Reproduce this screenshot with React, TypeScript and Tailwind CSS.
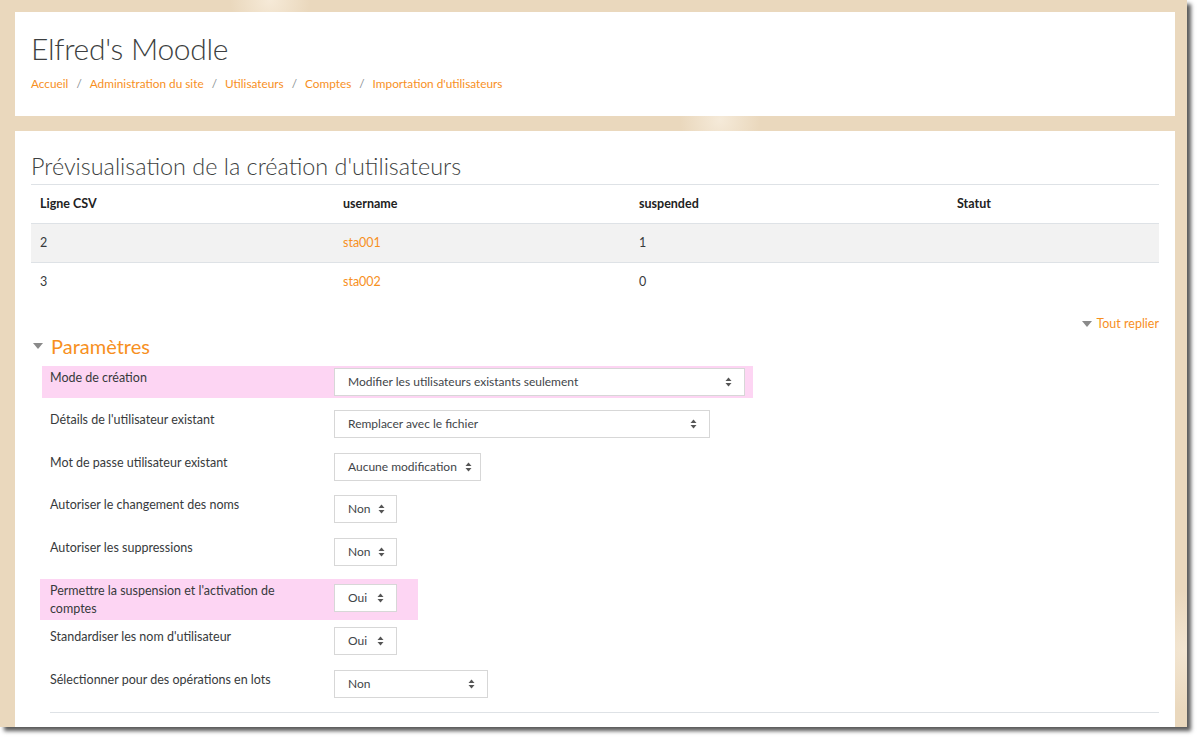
import React from 'react';

const orange = 'text-[#f7901e]';

function Arrows() {
  return (
    <svg width="7" height="10" viewBox="0 0 7 10" className="shrink-0">
      <path d="M3.5 0.5 L6.5 4 L0.5 4 Z" fill="#555" />
      <path d="M0.5 6 L6.5 6 L3.5 9.5 Z" fill="#555" />
    </svg>
  );
}

function Select({ value, width, className = '' }: { value: string; width: string; className?: string }) {
  return (
    <div
      className={`${width} h-[28px] shrink-0 border border-[#d7d7d7] bg-white flex items-center justify-between gap-[8px] pl-[13px] pr-[12px] text-[12px] text-[#3f4549] whitespace-nowrap ${className}`}
    >
      <span>{value}</span>
      <Arrows />
    </div>
  );
}

function Caret({ size = 10 }: { size?: number }) {
  return (
    <svg width={size} height={size * 0.6} viewBox="0 0 10 6">
      <path d="M0 0 L10 0 L5 6 Z" fill="#8a8a8a" />
    </svg>
  );
}

const rows = [
  { label: 'Mode de création', value: 'Modifier les utilisateurs existants seulement', w: 'w-[411px]', pink: true, cls: 'mt-0 ml-[11px] pl-[8px] w-[711px]' },
  { label: "Détails de l'utilisateur existant", value: 'Remplacer avec le fichier', w: 'w-[376px]', cls: 'mt-[10px] ml-[11px] pl-[8px]' },
  { label: 'Mot de passe utilisateur existant', value: 'Aucune modification', w: 'w-[147px]', cls: 'mt-[11px] ml-[11px] pl-[8px]' },
  { label: 'Autoriser le changement des noms', value: 'Non', w: 'w-[63px]', cls: 'mt-[10px] ml-[11px] pl-[8px]' },
  { label: 'Autoriser les suppressions', value: 'Non', w: 'w-[63px]', cls: 'mt-[11px] ml-[11px] pl-[8px]' },
  { label: "Permettre la suspension et l'activation de comptes", value: 'Oui', w: 'w-[63px]', pink: true, cls: 'mt-[11px] ml-[9px] pl-[10px] w-[378px]', two: true },
  { label: "Standardiser les nom d'utilisateur", value: 'Oui', w: 'w-[63px]', cls: 'mt-[5px] ml-[11px] pl-[8px]' },
  { label: 'Sélectionner pour des opérations en lots', value: 'Non', w: 'w-[154px]', cls: 'mt-[11px] ml-[11px] pl-[8px]' },
];

export default function App() {
  return (
    <div className="w-[1200px] h-[740px] bg-white overflow-hidden font-['Lato','Open_Sans',sans-serif] text-[#373a3c]">
      <div className="w-[1187px] h-[727px] flex flex-col gap-[15px] pt-[12px] pl-[15px] pr-[12px] bg-[#ead8bd] bg-[radial-gradient(circle_at_270px_0px,#f6ead8_0,transparent_40px),radial-gradient(circle_at_720px_120px,#f5ead9_0,transparent_40px),radial-gradient(circle_at_1185px_650px,#f3e6d2_0,transparent_60px)] shadow-[4px_4px_4px_rgba(0,0,0,0.65)]">
        {/* header */}
        <div className="h-[104px] shrink-0 bg-white pt-[18px] px-[16px]">
          <h1 className="text-[30px] leading-[36px] font-light text-[#3d3f41] tracking-[-0.3px]">Elfred's Moodle</h1>
          <nav className={`mt-[9px] text-[11.8px] leading-[18px] flex items-center ${orange}`}>
            {['Accueil', 'Administration du site', 'Utilisateurs', 'Comptes', "Importation d'utilisateurs"].map((b, i) => (
              <React.Fragment key={b}>
                {i > 0 && <span className="px-[8px] text-[#8a8f93]">/</span>}
                <span>{b}</span>
              </React.Fragment>
            ))}
          </nav>
        </div>

        {/* main */}
        <div className="flex-1 bg-white pt-[20px] px-[16px]">
          <h2 className="text-[23.4px] leading-[30px] font-light text-[#3d3f41] mb-[3px]">Prévisualisation de la création d'utilisateurs</h2>
          <div className="text-[12.5px]">
            <div className="grid grid-cols-[303px_296px_318px_1fr] h-[39px] border-t border-[#dee2e6] items-center font-bold text-[#222]">
              <div className="pl-[9px]">Ligne CSV</div>
              <div className="pl-[9px]">username</div>
              <div className="pl-[9px]">suspended</div>
              <div className="pl-[9px]">Statut</div>
            </div>
            <div className="grid grid-cols-[303px_296px_318px_1fr] h-[39px] border-t border-[#dee2e6] items-center bg-[#f2f2f2]">
              <div className="pl-[9px]">2</div>
              <div className={`pl-[9px] ${orange}`}>sta001</div>
              <div className="pl-[9px]">1</div>
              <div />
            </div>
            <div className="grid grid-cols-[303px_296px_318px_1fr] h-[39px] border-t border-[#dee2e6] items-center">
              <div className="pl-[9px]">3</div>
              <div className={`pl-[9px] ${orange}`}>sta002</div>
              <div className="pl-[9px]">0</div>
              <div />
            </div>
          </div>

          <div className={`mt-[14px] flex justify-end items-center gap-[4px] text-[12.5px] leading-[18px] ${orange}`}>
            <Caret />
            <span>Tout replier</span>
          </div>

          <div className="flex items-center gap-[8px] pl-[2px] h-[26px]">
            <Caret />
            <span className={`text-[20px] ${orange}`}>Paramètres</span>
          </div>

          <div className="mt-[7px] flex flex-col text-[12.5px]">
            {rows.map((r) => (
              <div
                key={r.label}
                className={`flex items-start py-[2px] ${r.pink ? 'bg-[#fdd5f3]' : ''} ${r.cls}`}
              >
                <div className={`w-[284px] shrink-0 leading-[18px] pt-[1px] ${r.two ? 'pr-[50px]' : ''}`}>{r.label}</div>
                <Select value={r.value} width={r.w} className={r.two ? 'mt-[3px]' : ''} />
              </div>
            ))}
            <div className="ml-[19px] mt-[12px] border-t border-[#dee2e6]" />
          </div>
        </div>
      </div>
    </div>
  );
}
